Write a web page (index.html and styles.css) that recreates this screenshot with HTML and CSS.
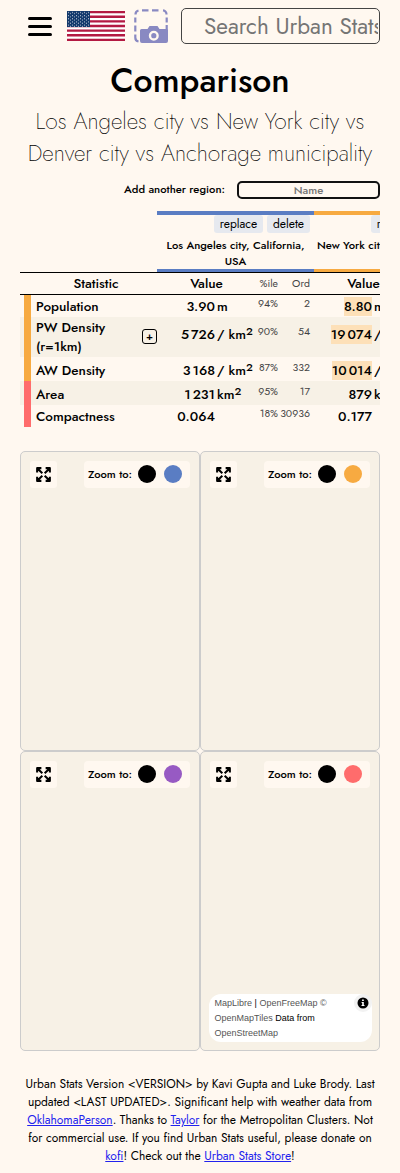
FILE: index.html
```html
<!DOCTYPE html>
<html lang="en">
<head>
<meta charset="utf-8">
<title>Comparison</title>
<link rel="stylesheet" href="styles.css">
</head>
<body>
<svg class="defs" width="0" height="0">
  <defs>
    <symbol id="expand" viewBox="0 0 16 16">
      <path d="M2 6V2h4M2.300 2.300l4.600 4.600M14 6V2h-4M13.700 2.300L9.100 6.900M2 10v4h4M2.300 13.700l4.600-4.600M14 10v4h-4M13.700 13.700L9.100 9.100" fill="none" stroke="#000" stroke-width="1.900" stroke-linejoin="round"/>
    </symbol>
    <pattern id="stars" width="4" height="3.200" patternUnits="userSpaceOnUse">
      <circle cx="1.500" cy="1.400" r=".55" fill="#fff" opacity=".8"/><circle cx="3.400" cy="2.600" r=".55" fill="#fff" opacity=".8"/>
    </pattern>
  </defs>
</svg>
<header class="bar">
  <div class="burger"><i></i><i></i><i></i></div>
  <svg class="flag" width="58" height="30" viewBox="0 0 58 30">
    <rect width="58" height="30" fill="#fff"/>
    <path d="M0 1.150h58M0 5.770h58M0 10.380h58M0 15h58M0 19.620h58M0 24.230h58M0 28.850h58" stroke="#b31942" stroke-width="2.310"/>
    <rect width="23" height="16" fill="#12386b"/><rect width="23" height="16" fill="url(#stars)"/>
  </svg>
  <svg class="shot" width="34" height="34" viewBox="0 0 34 34">
    <g fill="none" stroke="#8989c2" stroke-width="2.200">
      <path d="M1.500 5.500A4 4 0 0 1 4.500 1.500M8 1.300h6.500M18 1.300h6.500M29 1.300A4 4 0 0 1 32.500 5.500M1.300 8.500v5M1.300 16.500v6M1.300 25.500v3A4 4 0 0 0 4.500 32.500M32.700 8.500v5M32.700 16v4"/>
    </g>
    <path d="M7.500 20h6l2-3h8l2 3h8q.5 0 .5.500V32q0 2-2 2H8q-2 0-2-2V21.500Q6 20 7.500 20z" fill="#8989c2"/>
    <circle cx="19.800" cy="26.700" r="3.800" fill="none" stroke="#fff8f0" stroke-width="2.400"/>
  </svg>
  <div class="search"><span>Search Urban Stats</span></div>
</header>
<h1><span>Comparison</span></h1>
<h2><span class="s1">Los Angeles city vs New York city vs</span><span class="s2">Denver city vs Anchorage municipality</span></h2>
<div class="add"><label>Add another region:</label><div class="name"><span>Name</span></div></div>

<section class="table">
  <div class="row heads">
    <div></div>
    <div class="place blue"><div class="btns"><b class="rep">replace</b><b class="del">delete</b></div><p><span>Los Angeles city, California,</span><br><span>USA</span></p></div>
    <div class="place orange"><div class="btns"><b class="rep lone">replace</b><b class="del">delete</b></div><p><span>New York city, New York, USA</span></p></div>
  </div>
  <div class="row cols">
    <div class="stat">Statistic</div>
    <div class="cell"><span class="vh">Value</span><span class="pct">%ile</span><span class="ord">Ord</span></div>
    <div class="cell"><span class="vh">Value</span></div>
  </div>
  <div class="row r22">
    <div class="label"><span>Population</span></div>
    <div class="cell"><span class="val">3.90</span><span class="unit">m</span><span class="pct">94%</span><span class="ord">2</span></div>
    <div class="cell"><span class="val"><mark>8.80</mark></span><span class="unit">m</span></div>
  </div>
  <div class="row r40 alt">
    <div class="label"><span>PW Density<br>(r=1km)</span><i class="plus">+</i></div>
    <div class="cell"><span class="val">5<s></s>726</span><span class="unit">/ km<sup>2</sup></span><span class="pct">90%</span><span class="ord">54</span></div>
    <div class="cell"><span class="val"><mark>19<s></s>074</mark></span><span class="unit">/ km<sup>2</sup></span></div>
  </div>
  <div class="row r24">
    <div class="label"><span>AW Density</span></div>
    <div class="cell"><span class="val">3<s></s>168</span><span class="unit">/ km<sup>2</sup></span><span class="pct">87%</span><span class="ord">332</span></div>
    <div class="cell"><span class="val"><mark>10<s></s>014</mark></span><span class="unit">/ km<sup>2</sup></span></div>
  </div>
  <div class="row r24 alt red">
    <div class="label"><span>Area</span></div>
    <div class="cell"><span class="val">1<s></s>231</span><span class="unit">km<sup>2</sup></span><span class="pct">95%</span><span class="ord">17</span></div>
    <div class="cell"><span class="val">879</span><span class="unit">km<sup>2</sup></span></div>
  </div>
  <div class="row r22 red">
    <div class="label"><span>Compactness</span></div>
    <div class="cell"><span class="val">0.064</span><span class="unit"></span><span class="pct">18%</span><span class="ord">30936</span></div>
    <div class="cell"><span class="val">0.177</span></div>
  </div>
</section>

<section class="maps">
  <div class="map"><div class="ex"><svg width="17" height="17"><use href="#expand"/></svg></div><div class="zoom"><span>Zoom to:</span><i></i><i class="cb"></i></div></div>
  <div class="map"><div class="ex"><svg width="17" height="17"><use href="#expand"/></svg></div><div class="zoom"><span>Zoom to:</span><i></i><i class="co"></i></div></div>
  <div class="map"><div class="ex"><svg width="17" height="17"><use href="#expand"/></svg></div><div class="zoom"><span>Zoom to:</span><i></i><i class="cp"></i></div></div>
  <div class="map"><div class="ex"><svg width="17" height="17"><use href="#expand"/></svg></div><div class="zoom"><span>Zoom to:</span><i></i><i class="cr"></i></div>
    <div class="attr"><span><a>MapLibre</a> | <a>OpenFreeMap</a> <a>©</a><br><a>OpenMapTiles</a> Data from<br><a>OpenStreetMap</a></span>
      <svg class="info" width="18" height="18" viewBox="0 0 18 18"><circle cx="9" cy="9" r="9" fill="#f2f2f2"/><circle cx="9" cy="9" r="5.500"/><path d="M8.100 5.400h1.700v1.500H8.100zM7.600 7.900h2.200v3.200h.7v1H7.500v-1h.7V8.900h-.6z" fill="#fff"/></svg>
    </div>
  </div>
</section>

<footer>
  <span>Urban Stats Version &lt;VERSION&gt; by Kavi Gupta and Luke Brody. Last</span>
  <span>updated &lt;LAST UPDATED&gt;. Significant help with weather data from</span>
  <span><a>OklahomaPerson</a>. Thanks to <a>Taylor</a> for the Metropolitan Clusters. Not</span>
  <span>for commercial use. If you find Urban Stats useful, please donate on</span>
  <span><a>kofi</a>! Check out the <a>Urban Stats Store</a>!</span>
</footer>
</body>
</html>
```
FILE: styles.css
```css
* { box-sizing: border-box; }
body { margin: 0; width: 400px; height: 1173px; overflow: hidden; background: #fff8f0; color: #000; font-family: Jost, Lato, sans-serif; font-weight: 500; display: flex; flex-direction: column; }
h1, h2, p { margin: 0; }
.defs { position: absolute; }
.bar { display: flex; padding: 8px 20px 0 28px; height: 61px; }
.burger { width: 24px; padding-top: 9px; display: flex; flex-direction: column; gap: 5px; }
.burger i { height: 3px; border-radius: 1.5px; background: #000; }
.flag { margin: 3px 0 0 15px; }
.shot { margin: 1px 0 0 9px; }
.search { margin-left: 13px; width: 199px; height: 36px; border: 1px solid #444; border-radius: 5px; overflow: hidden; white-space: nowrap; padding: 0 1px 0 22px; font-size: 22.5px; font-weight: 400; line-height: 34px; color: #757575; }
.search span { display: block; overflow: hidden; }
h1 { height: 44px; line-height: 39px; font-size: 33.75px; font-weight: 500; text-align: center; }
h2 { height: 64px; font-size: 22.5px; line-height: 32px; font-weight: 200; text-align: center; }
h2 span { display: block; white-space: nowrap; }
.add { display: flex; justify-content: flex-end; gap: 12px; height: 42px; padding: 12px 20px 0 0; font-size: 11.25px; line-height: 17px; }
.name { width: 143px; height: 18px; border: 2px solid #111; border-radius: 5px; text-align: center; line-height: 15px; color: #757575; }
.table { margin-left: 20px; width: 360px; height: 216px; overflow: hidden; font-size: 13.5px; }
.row { display: grid; grid-template-columns: 137px 157px 157px; position: relative; }
.heads { height: 61px; }
.place { border-top: 4px solid #5a7dc3; border-bottom: 3px solid #5a7dc3; }
.place.orange { border-color: #f7aa41; }
.btns { display: flex; justify-content: flex-end; gap: 4px; padding-right: 4px; height: 18px; font-size: 12px; line-height: 18px; }
.btns b { font-weight: 400; text-align: center; background: #e6e9ef; border-radius: 3px; }
.rep { width: 49px; } .del { width: 43px; }
.place p { font-size: 11.25px; line-height: 16px; padding-top: 4px; text-align: center; white-space: nowrap; }
.cols { height: 23px; border-top: 1px solid #000; border-bottom: 1px solid #000; line-height: 21px; }
.stat { padding-left: 15px; text-align: center; }
.cell { display: grid; grid-template-columns: 58px 38px 25px 32px; align-items: center; white-space: nowrap; }
.vh { grid-column: span 2; text-align: center; padding-left: 3px; }
.val, .pct, .ord { text-align: right; }
.unit { padding-left: 2px; }
.pct, .ord { font-size: 10.5px; font-weight: 400; color: #444; }
.row:not(.cols) .pct, .row:not(.cols) .ord { padding-bottom: 6px; }
.val s { display: inline-block; width: 2px; }
sup { font-size: 11.25px; line-height: 0; font-weight: 500; vertical-align: 4.5px; }
mark { display: inline-block; background: #fde0b8; color: inherit; line-height: 19px; }
.label { margin-left: 4px; border-left: 7px solid #f7aa41; padding-left: 5px; display: flex; align-items: center; justify-content: space-between; line-height: 19px; }
.red .label { border-color: #ff6c6c; }
.r22 { height: 22px; } .r24 { height: 24px; } .r40 { height: 40px; }
.r24 .cell, .r24 .label { padding-top: 2px; }
.r40 .cell { padding-bottom: 5px; }
.alt { background: #f7f1e6; }
.plus { width: 15px; height: 15px; border: 1px solid #000; border-radius: 3px; font-size: 11px; font-style: normal; line-height: 12px; text-align: center; position: relative; top: -1px; }
.maps { margin: 24px 20px 0; display: grid; grid-template-columns: 180px 180px; grid-auto-rows: 300px; }
.map { border: 1px solid #ccc; border-radius: 5px; background: #f7f1e6; padding: 9px; display: flex; flex-wrap: wrap; justify-content: space-between; align-content: space-between; }
.ex { width: 27px; height: 27px; border-radius: 3px; background: #fff8f0; display: grid; place-items: center; }
.ex svg { margin-bottom: 1px; }
.zoom { width: 106px; height: 27px; border-radius: 4px; background: #fff8f0; display: flex; align-items: center; padding: 0 0 1px 4px; font-size: 11.25px; }
.zoom span { width: 50px; white-space: nowrap; }
.zoom i { width: 18px; height: 18px; border-radius: 50%; background: #000; margin-right: 8px; }
.zoom .cb { background: #5a7dc3; } .zoom .co { background: #f7aa41; } .zoom .cp { background: #975ac3; } .zoom .cr { background: #ff6c6c; }
.attr { width: 163px; height: 48px; margin: 0 -2px -1px -1px; background: #fff; border-radius: 12px; padding: 2px 0 0 5.5px; display: flex; justify-content: space-between; font: 9px/15px "Liberation Sans", sans-serif; }
.attr a { color: #555; }
.info { margin-top: -2px; }
footer { margin-top: 24px; font-size: 12px; font-weight: 400; text-align: center; line-height: 18px; }
footer span { display: block; white-space: nowrap; }
footer a { color: #22e; text-decoration: underline; }
```
